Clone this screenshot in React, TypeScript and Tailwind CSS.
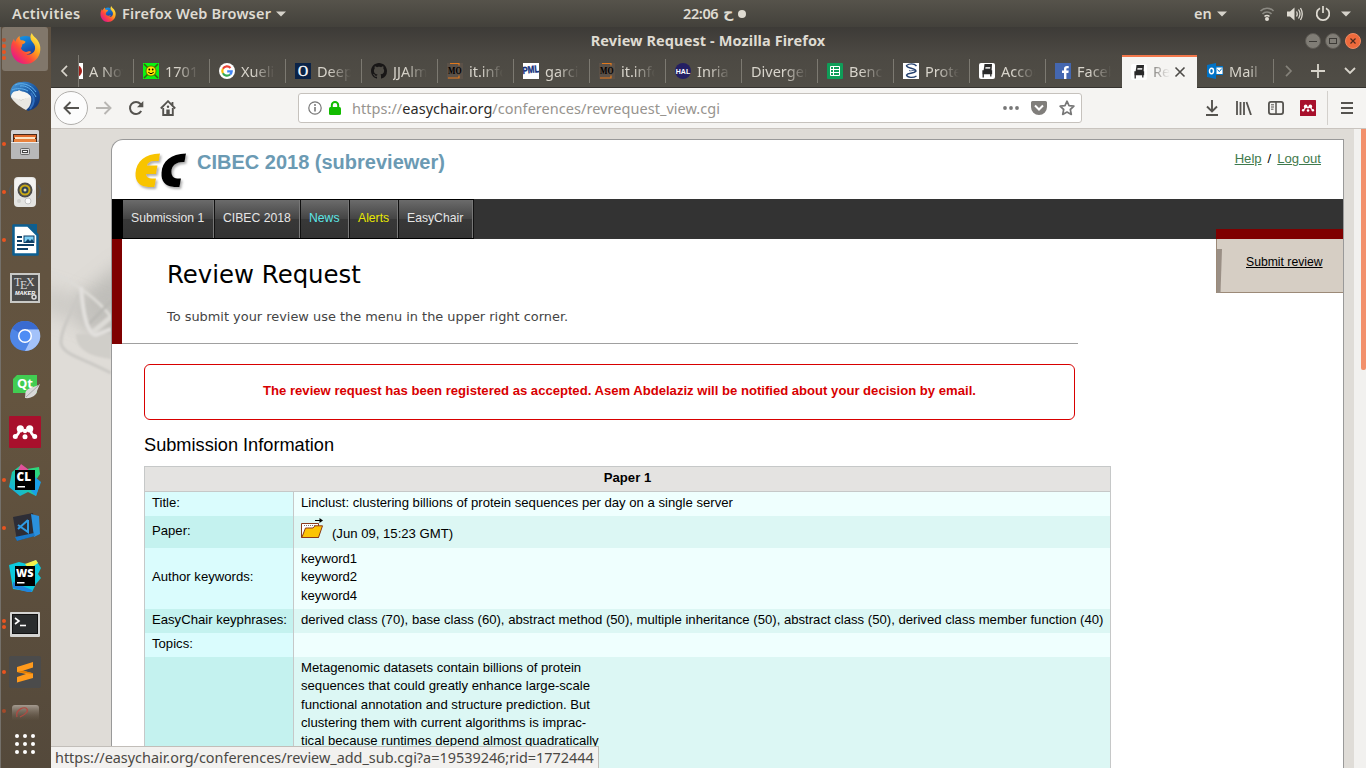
import React from "react";

const UBUNTU = "font-['Noto_Sans',sans-serif]";

/* ---------- dock ---------- */

function FirefoxIcon({ size }: { size: number }) {
  return (
    <svg width={size} height={size} viewBox="0 0 32 32">
      <defs>
        <linearGradient id="ffBody" x1="0.9" y1="0.1" x2="0.15" y2="0.9">
          <stop offset="0" stopColor="#fff04a" />
          <stop offset="0.35" stopColor="#ffa41c" />
          <stop offset="0.65" stopColor="#ff4b3a" />
          <stop offset="1" stopColor="#e3168b" />
        </linearGradient>
        <linearGradient id="ffGlobe" x1="0" y1="0" x2="0.4" y2="1">
          <stop offset="0" stopColor="#12a0f0" />
          <stop offset="1" stopColor="#1b3a9c" />
        </linearGradient>
      </defs>
      <circle cx="16" cy="14.5" r="11.5" fill="url(#ffGlobe)" />
      <path
        d="M1 16C1 11 3 8 4 6c.4 1.5.8 2.2 1.6 3C6.500 6 8 4 10 3c-.3 2 .3 3.400 1.300 4.400 1.700.1 3.500 0 4.700 1.600-.4 1.600-2 2.400-3.500 2.800.3 1.800-.4 2.700-1.300 3.800 1 3.200 4.300 4.800 7.300 3.600 1.500-.6 2.600-.5 3.400.4-1.200 1.700-3.200 2.200-5 2.400 4.600 1 8.600-1.600 9-6 .3-3-1.300-5.200-3-7C20.500 6.500 20.500 3 22.500 0c.8 3 4 4.500 6 7.500 2 3 3 6 2.800 9.500C31 25.500 24.500 32 16 32S1 25 1 16Z"
        fill="url(#ffBody)"
      />
    </svg>
  );
}

function ThunderbirdIcon() {
  return (
    <svg width="32" height="32" viewBox="0 0 32 32">
      <defs>
        <linearGradient id="tb" x1="0" y1="0" x2="1" y2="1">
          <stop offset="0" stopColor="#4fa0dc" />
          <stop offset="0.5" stopColor="#1c5aa5" />
          <stop offset="1" stopColor="#0f2c6b" />
        </linearGradient>
      </defs>
      <path d="M2 18C-1 9 5 1 13 2c9-2 18 5 18 15 0 7-4 12-12 14Z" fill="url(#tb)" />
      <path d="M2 17c2 4 7 9 15 13 4-3 6-8 5-13L10 10Z" fill="#e9e7e2" />
      <path d="M4 15l8 5 9-4" stroke="#b0ada6" fill="none" />
      <path d="M2 17c0-3 2-6 6-6 7 0 12 2 14 6l-10 3Z" fill="#f6f5f2" />
      <path d="M6 5c6-3 16-1 21 7M11 6c6-1 12 3 16 11M3 10c4-2 11-2 16 1" stroke="#5fb0ea" fill="none" />
      <path d="M22 13c4 5 3 11-1 16" stroke="#2f6fc0" strokeWidth="2" fill="none" />
    </svg>
  );
}

function FilesIcon() {
  return (
    <svg width="32" height="32" viewBox="0 0 32 32">
      <rect x="2" y="2" width="28" height="29" rx="2" fill="#a9a9a9" />
      <rect x="2" y="2" width="28" height="11" rx="2" fill="#d3d3d3" />
      <rect x="4" y="6" width="24" height="8" fill="#4a2a1b" />
      <rect x="5" y="7" width="22" height="3" fill="#e06a2b" />
      <rect x="6" y="9" width="20" height="2" fill="#fbe3c4" />
      <rect x="5" y="11" width="22" height="3" fill="#e8823d" />
      <rect x="2" y="14" width="28" height="17" rx="1" fill="#b8b8b8" />
      <rect x="2" y="14" width="28" height="1" fill="#ececec" />
      <rect x="11.500" y="20.500" width="9" height="6" rx="1" fill="#ddd" stroke="#666" />
      <rect x="13.500" y="22.500" width="5" height="2" fill="#fff" stroke="#444" />
    </svg>
  );
}

function RhythmboxIcon() {
  return (
    <svg width="34" height="32" viewBox="0 0 34 32">
      <path d="M4 9c-3 4-3 9 0 13M30 9c3 4 3 9 0 13" stroke="#55585a" strokeWidth="1.500" fill="none" />
      <rect x="6" y="1" width="22" height="30" rx="4" fill="#e4e4e2" />
      <rect x="7" y="2" width="20" height="14" rx="4" fill="#f3f3f2" />
      <circle cx="17" cy="14" r="7.500" fill="#4c4c4c" />
      <circle cx="17" cy="14" r="5.500" fill="#c9a916" />
      <circle cx="17" cy="14" r="3.500" fill="#2f4356" />
      <circle cx="17" cy="14" r="1.500" fill="#e8e2b0" />
      <circle cx="11" cy="25" r="2" fill="#cfcfcd" />
      <circle cx="20" cy="25" r="3" fill="#fafafa" stroke="#c4c4c4" />
    </svg>
  );
}

function WriterIcon() {
  return (
    <svg width="32" height="32" viewBox="0 0 32 32">
      <path d="M4.500 1.500H19L28.500 11V30.500H4.500Z" fill="#fff" stroke="#0c5f92" strokeWidth="2.500" strokeLinejoin="round" />
      <path d="M20 0h8v9Z" fill="#0c5f92" />
      <path d="M8 13h5M8 17h5M8 21h17M8 25h11" stroke="#0f3f66" strokeWidth="2" />
      <rect x="15" y="12" width="10" height="6.500" fill="#7fd0f5" stroke="#0f3f66" />
      <path d="M16 18l3-3 2 2 2-2 2 3Z" fill="#0f3f66" />
    </svg>
  );
}

function TexmakerIcon() {
  return (
    <svg width="32" height="32" viewBox="0 0 32 32">
      <rect x="2" y="2" width="28" height="28" fill="#4b4b4b" stroke="#c9c9c6" strokeWidth="2" />
      <text fontFamily="Liberation Serif" fontSize="12" fill="#d9d9d9" x="5 11 17" y="14 17 14">TEX</text>
      <text x="6" y="22.500" fontFamily="Liberation Sans" fontWeight="700" fontStyle="italic" fontSize="5.500" fill="#fff">MAKER</text>
      <circle cx="25" cy="25" r="2" fill="none" stroke="#ddd" strokeWidth="1.500" />
    </svg>
  );
}

function ChromiumIcon() {
  return (
    <svg width="32" height="32" viewBox="0 0 32 32">
      <circle cx="16" cy="16" r="15" fill="#4f86e6" />
      <path d="M16 16L3 8.500A15 15 0 0 1 29.500 9.500H16Z" fill="#3a6bd0" />
      <path d="M22 19L16 31A15 15 0 0 0 29.800 9.500H18Z" fill="#a3c2fa" />
      <circle cx="16" cy="16" r="7" fill="#fff" />
      <circle cx="16" cy="16" r="5.500" fill="#4e8df5" />
    </svg>
  );
}

function QtIcon() {
  return (
    <svg width="32" height="32" viewBox="0 0 32 32">
      <path d="M8 7H28V25H4V11Z" fill="#41cd52" />
      <text x="8" y="20" fontFamily="Open Sans" fontWeight="700" fontSize="13" fill="#fff">Qt</text>
      <path d="M31 16c-3 3-12 3-14.500 8L16 30c6 1 12-3 12-7Z" fill="#d9d9d9" />
      <path d="M30 17L17 29" stroke="#aaa" />
    </svg>
  );
}

function MendeleyIcon({ size }: { size: number }) {
  return (
    <svg width={size} height={size} viewBox="0 0 32 32">
      <rect width="32" height="32" rx="1" fill="#a8102c" />
      <g fill="#fff">
        <circle cx="11.300" cy="12.800" r="3.600" />
        <circle cx="20.700" cy="12.800" r="3.600" />
        <circle cx="16" cy="15" r="2.200" />
        <circle cx="6.300" cy="20.500" r="2.500" />
        <circle cx="16" cy="20.800" r="2.500" />
        <circle cx="25.700" cy="20.500" r="2.500" />
      </g>
      <path d="M6.300 20.500c1.700-1 3.700-3 4.300-6.500M25.700 20.500c-1.700-1-3.700-3-4.300-6.500" stroke="#fff" strokeWidth="2.600" fill="none" />
    </svg>
  );
}

function ClionIcon() {
  return (
    <svg width="32" height="32" viewBox="0 0 32 32">
      <defs>
        <linearGradient id="cl" x1="0" y1="1" x2="1" y2="0">
          <stop offset="0" stopColor="#12a7f0" />
          <stop offset="0.55" stopColor="#1fd19b" />
          <stop offset="1" stopColor="#32d96f" />
        </linearGradient>
      </defs>
      <path d="M3 8L12 1l6 4L30 3l1 7-4 6 4 3-4 13-8-4-8 4L0 23Z" fill="url(#cl)" />
      <path d="M12 0l8 6H9Z" fill="#e0519a" />
      <path d="M26 13l6 5-5 14-5-5Z" fill="#1a9fe8" />
      <rect x="6" y="6" width="20" height="20" fill="#000" />
      <text x="7.500" y="16.500" fontFamily="Open Sans" fontWeight="800" fontSize="11.500" textLength="14.500" lengthAdjust="spacingAndGlyphs" fill="#fff">CL</text>
      <rect x="8.500" y="22" width="7.500" height="1.500" fill="#fff" />
    </svg>
  );
}

function CodeIcon() {
  return (
    <svg width="32" height="32" viewBox="0 0 32 32">
      <path d="M4 5l20-4 4 22-20 6Z" fill="#2d2d36" />
      <path d="M22 2l8 2 1 18-6 3Z" fill="#2a90dd" />
      <path d="M8 29l-2-4 19-4 1 3Z" fill="#1a78c8" />
      <path d="M19 8v12l-10-7M19 8L9 17" stroke="#2f9be5" strokeWidth="2" fill="none" />
    </svg>
  );
}

function WebstormIcon() {
  return (
    <svg width="32" height="32" viewBox="0 0 32 32">
      <path d="M0 5l10-3 8 2 9-4 5 8-3 6 3 4-5 6-4 8-19-3Z" fill="#0bc9dd" />
      <path d="M16 4l11-4 2 3-9 6Z" fill="#f4f04a" />
      <path d="M4 22l19 8-1 3L4 28Z" fill="#2184dd" />
      <rect x="6" y="6" width="20" height="20" fill="#000" />
      <text x="7" y="16.500" fontFamily="Open Sans" fontWeight="800" fontSize="11" textLength="17.500" lengthAdjust="spacingAndGlyphs" fill="#fff">WS</text>
      <rect x="8" y="22" width="7.500" height="1.500" fill="#fff" />
    </svg>
  );
}

function TerminalIcon() {
  return (
    <svg width="32" height="32" viewBox="0 0 32 32">
      <rect x="1" y="4" width="30" height="25" rx="1" fill="#d4d4d2" />
      <rect x="3.500" y="6.500" width="25" height="19" fill="#2a2d2e" stroke="#111" />
      <path d="M6 10l4 3-4 3" stroke="#fff" strokeWidth="1.600" fill="none" />
      <path d="M11 17.500h6" stroke="#fff" strokeWidth="1.600" />
    </svg>
  );
}

function SublimeIcon() {
  return (
    <svg width="32" height="32" viewBox="0 0 32 32">
      <rect width="32" height="32" rx="2" fill="#4b4b4b" />
      <path d="M8 11L24 6v5.500L14 14.700l10 2.600V22L8 26.500V21l9-3L8 16Z" fill="#ff9a1c" />
      <path d="M8 16l16 2v-.7l-10-2.600Z" fill="#e07b00" />
    </svg>
  );
}

function FadedIcon() {
  return (
    <svg width="32" height="16" viewBox="0 0 32 16">
      <defs>
        <linearGradient id="fade" x1="0" y1="0" x2="0" y2="1">
          <stop offset="0" stopColor="#a59b90" />
          <stop offset="1" stopColor="#6a5c4d" stopOpacity="0" />
        </linearGradient>
      </defs>
      <rect x="3" y="1" width="27" height="16" rx="3" fill="url(#fade)" />
      <path d="M8 13c-2-8 8-11 10-8s-3 6-7 8" stroke="#b04a42" strokeWidth="1.300" fill="none" />
    </svg>
  );
}

function DockItem({ dots, children }: { dots: number; children: React.ReactNode }) {
  return (
    <div className="relative flex h-12 w-12 shrink-0 items-center justify-center">
      <div className="absolute inset-y-0 left-[1px] flex flex-col items-center justify-center gap-[2px]">
        {Array.from({ length: dots }, (_, i) => (
          <span key={i} className="size-1 rounded-full bg-[#e95420]" />
        ))}
      </div>
      {children}
    </div>
  );
}

function Dock() {
  return (
    <aside className="flex w-[51px] shrink-0 flex-col overflow-hidden border-l border-[#74706a] bg-linear-to-b from-[#5e5142] via-[#64543f] to-[#54493b]">
      <div className="relative flex h-[45px] w-12 shrink-0 items-center justify-center pb-[3px]">
        <span className="absolute top-0 left-[1px] h-[44px] w-[46px] rounded-[3px] bg-[#81776b]" />
        <div className="absolute top-[11px] left-[1px] flex flex-col gap-[2px]">
          <span className="size-1 rounded-full bg-[#b5532f]" />
          <span className="size-1 rounded-full bg-[#e95420]" />
          <span className="size-1 rounded-full bg-[#e95420]" />
          <span className="size-1 rounded-full bg-[#e95420]" />
        </div>
        <span className="relative"><FirefoxIcon size={31} /></span>
      </div>
      <DockItem dots={0}><ThunderbirdIcon /></DockItem>
      <DockItem dots={1}><FilesIcon /></DockItem>
      <DockItem dots={1}><RhythmboxIcon /></DockItem>
      <DockItem dots={1}><WriterIcon /></DockItem>
      <DockItem dots={0}><TexmakerIcon /></DockItem>
      <DockItem dots={0}><ChromiumIcon /></DockItem>
      <DockItem dots={0}><QtIcon /></DockItem>
      <DockItem dots={0}><MendeleyIcon size={32} /></DockItem>
      <DockItem dots={1}><ClionIcon /></DockItem>
      <DockItem dots={1}><CodeIcon /></DockItem>
      <DockItem dots={0}><WebstormIcon /></DockItem>
      <DockItem dots={2}><TerminalIcon /></DockItem>
      <DockItem dots={1}><SublimeIcon /></DockItem>
      <div className="relative flex h-[32px] w-12 shrink-0 justify-center pt-[8px]">
        <span className="absolute top-[13px] left-[1px] size-1 rounded-full bg-[#a34a2a]" />
        <FadedIcon />
      </div>
      <div className="mt-[6px] grid w-12 grid-cols-[repeat(3,4px)] justify-center gap-1">
        {Array.from({ length: 9 }, (_, i) => (
          <span key={i} className="size-1 rounded-full bg-white" />
        ))}
      </div>
    </aside>
  );
}

/* ---------- system bar ---------- */

function Caret() {
  return (
    <svg width="10" height="6" viewBox="0 0 10 6"><path d="M0 .5h10L5 5.500Z" fill="#d5d2ca" /></svg>
  );
}

function SystemBar() {
  return (
    <header className={`${UBUNTU} flex h-[27px] shrink-0 items-center bg-linear-to-b from-[#56534b] to-[#43413b] text-[14.500px] font-semibold text-[#dfdbd2]`}>
      <div className="w-[88px] pl-3 tracking-[0.4px]">Activities</div>
      <div className="flex w-[595px] items-center pl-3">
        <FirefoxIcon size={16} />
        <span className="ml-[6px] tracking-[0.200px]">Firefox Web Browser</span>
        <span className="ml-[5px] flex"><Caret /></span>
      </div>
      <div className="flex w-[511px] items-center">
        <span className="tracking-[-0.4px]">22:06</span>
        <span className="ml-[5px] font-['DejaVu_Sans',sans-serif] text-[14px]">ح</span>
        <span className="ml-[5px] size-[8px] rounded-full bg-[#dfdbd2]" />
      </div>
      <span className="w-[23px]">en</span>
      <Caret />
      <svg className="ml-[32px]" width="16" height="16" viewBox="0 0 16 16" fill="none">
        <path d="M1.500 5a9 9 0 0 1 13 0" stroke="#8b8982" strokeWidth="1.600" />
        <path d="M3.500 8a6 6 0 0 1 9 0" stroke="#8b8982" strokeWidth="1.600" />
        <path d="M5.500 10.500a3.500 3.500 0 0 1 5 0" stroke="#dfdbd2" strokeWidth="1.600" />
        <circle cx="8" cy="13" r="2" fill="#dfdbd2" />
      </svg>
      <svg className="ml-[12px]" width="16" height="16" viewBox="0 0 16 16" fill="none">
        <path d="M0 5.500h3L7.500 1.500v13L3 10.500H0Z" fill="#dfdbd2" />
        <path d="M9.500 5.500q1.500 2.500 0 5M11.500 3.500q3 4.500 0 9M13.500 2q3.500 6 0 12" stroke="#dfdbd2" strokeWidth="1.300" />
      </svg>
      <svg className="ml-[12px]" width="16" height="16" viewBox="0 0 16 16" fill="none" stroke="#dfdbd2" strokeWidth="1.700">
        <path d="M5 2.300a6.300 6.300 0 1 0 6 0M8 0v7" />
      </svg>
      <span className="ml-[10px] flex"><Caret /></span>
    </header>
  );
}

/* ---------- browser chrome ---------- */

function TitleBar() {
  return (
    <div className="flex h-[28px] shrink-0 items-center bg-linear-to-b from-[#3d3b37] to-[#4c4943]">
      <div className={`${UBUNTU} flex-1 pl-[60px] text-center text-[14.500px] tracking-[0.1px] font-bold text-[#dfdbd2]`}>
        Review Request - Mozilla Firefox
      </div>
      <div className="flex gap-1 pr-[5px]">
        <svg width="16" height="16" viewBox="0 0 16 16"><circle cx="8" cy="8" r="7.500" fill="#807d76" stroke="#5d5a54" /><path d="M4 8.500h8" stroke="#3c3a36" /></svg>
        <svg width="16" height="16" viewBox="0 0 16 16"><circle cx="8" cy="8" r="7.500" fill="#807d76" stroke="#5d5a54" /><rect x="4.500" y="5.500" width="7" height="5" fill="none" stroke="#3c3a36" /></svg>
        <svg width="16" height="16" viewBox="0 0 16 16"><circle cx="8" cy="8" r="7.500" fill="#ee6a3c" stroke="#f08a62" /><path d="M5.500 5.500l5 5M10.500 5.500l-5 5" stroke="#4b2a1e" strokeWidth="1.200" /></svg>
      </div>
    </div>
  );
}

const Svg16 = ({ children }: { children: React.ReactNode }) => (
  <svg className="shrink-0" width="16" height="16" viewBox="0 0 16 16">{children}</svg>
);

const chair = (
  <Svg16>
    <rect width="16" height="16" rx="2" fill="#fff" />
    <path d="M5.500 1h7.500l-.5 7.500H4.500Z" fill="#2a2a2a" />
    <path d="M6.500 4h4.800l-.2 1.800H6.300Z" fill="#d8d8d8" />
    <path d="M4 8h8.500v2.500H4ZM4.200 10v4.500M11.800 10v3.500" stroke="#2a2a2a" strokeWidth="1.300" fill="#2a2a2a" />
  </Svg16>
);

const madOnt = (
  <Svg16>
    <rect width="16" height="16" fill="#5b5148" />
    <path d="M3 .5h9v2M12 12.500v2.500H1" stroke="#e2791c" strokeWidth="1.200" fill="none" />
    <text x="1" y="11" fontFamily="Liberation Serif" fontWeight="700" fontSize="10" textLength="13.500" lengthAdjust="spacingAndGlyphs" fill="#000">MO</text>
  </Svg16>
);

const favicons: Record<string, React.ReactNode> = {
  red: <Svg16><rect width="16" height="16" fill="#fff" /><circle cx="9" cy="8" r="6" fill="#a5201a" /></Svg16>,
  smile: (
    <Svg16>
      <rect width="16" height="16" fill="#0cf312" />
      <path d="M1 1l14 14M15 1L1 15" stroke="#3b5a12" strokeWidth="1.500" />
      <circle cx="8" cy="8" r="5" fill="#ffe600" stroke="#5a5a00" strokeWidth=".8" />
      <circle cx="6.300" cy="6.500" r=".9" /><circle cx="9.700" cy="6.500" r=".9" />
      <path d="M5.300 9.300q2.700 3 5.400 0" stroke="#000" fill="none" />
    </Svg16>
  ),
  google: (
    <Svg16>
      <circle cx="8" cy="8" r="8" fill="#fff" />
      <g fill="none" strokeWidth="2.200">
        <path d="M11.500 4.900A4.700 4.700 0 0 0 3.900 5.700" stroke="#ea4335" />
        <path d="M3.900 5.700a4.700 4.700 0 0 0 0 4.600" stroke="#fbbc05" />
        <path d="M3.900 10.300a4.700 4.700 0 0 0 7.200 1.200" stroke="#34a853" />
        <path d="M11.100 11.500A4.700 4.700 0 0 0 12.700 8.300H8.200" stroke="#4285f4" />
      </g>
    </Svg16>
  ),
  oxford: (
    <Svg16>
      <rect width="16" height="16" fill="#0b2347" />
      <text x="8" y="12.500" textAnchor="middle" fontFamily="Liberation Serif" fontSize="14" stroke="#fff" strokeWidth=".4" fill="#fff">O</text>
    </Svg16>
  ),
  github: (
    <Svg16>
      <path
        fill="#181616"
        d="M8 0C3.580 0 0 3.580 0 8c0 3.540 2.290 6.530 5.470 7.590.4.070.55-.17.55-.38 0-.19-.01-.82-.01-1.490-2.010.37-2.530-.49-2.690-.94-.09-.23-.48-.94-.82-1.130-.28-.15-.68-.52-.01-.53.63-.01 1.080.58 1.230.82.72 1.210 1.870.87 2.330.66.07-.52.28-.87.51-1.070-1.780-.2-3.640-.89-3.640-3.950 0-.87.31-1.590.82-2.150-.08-.2-.36-1.020.08-2.120 0 0 .67-.21 2.200.82.64-.18 1.320-.27 2-.27s1.360.09 2 .27c1.530-1.040 2.200-.82 2.200-.82.44 1.100.16 1.920.08 2.120.51.56.82 1.270.82 2.150 0 3.070-1.870 3.750-3.650 3.950.29.25.54.73.54 1.480 0 1.070-.01 1.930-.01 2.200 0 .21.15.46.55.38A8.010 8.010 0 0 0 16 8c0-4.420-3.580-8-8-8Z"
      />
    </Svg16>
  ),
  mo: madOnt,
  pml: (
    <Svg16>
      <rect width="16" height="16" fill="#fff" />
      <text x="-.5" y="10" fontFamily="Liberation Sans" fontWeight="700" fontSize="10" textLength="17" lengthAdjust="spacingAndGlyphs" fill="#14307c" stroke="#14307c" strokeWidth=".4" transform="rotate(-6 8 8)">PML</text>
    </Svg16>
  ),
  hal: (
    <Svg16>
      <circle cx="8" cy="8" r="8" fill="#241f63" />
      <text x="8" y="10.500" textAnchor="middle" fontFamily="Liberation Sans" fontWeight="700" fontSize="7" fill="#fff">HAL</text>
    </Svg16>
  ),
  sheets: (
    <Svg16>
      <rect width="16" height="16" rx="1" fill="#0f9d58" />
      <path d="M3.500 3.500h9v9h-9ZM3.500 6.500h9M3.500 9.500h9M6.500 3.500v9" stroke="#fff" fill="none" />
    </Svg16>
  ),
  prot: (
    <Svg16>
      <rect width="16" height="16" fill="#fff" />
      <path d="M13.500 3C11 0 6 .5 3.500 2.500c0 3 9 2.500 9.500 5.500-2 3-8 1.500-9.500 4 1 3 7 3 10 1" stroke="#24406e" strokeWidth="1.400" fill="none" />
      <path d="M6 7.500c2 1 3-.5 6 0" stroke="#5c7296" fill="none" />
    </Svg16>
  ),
  chair,
  fb: (
    <Svg16>
      <rect width="16" height="16" fill="#4467b0" />
      <path d="M9 16V10H7V7.500h2V5.800C9 3.800 10.200 3 12 3h1.700v2.300h-1.300c-.8 0-1 .4-1 1v1.200h2.300L13.400 10h-2v6Z" fill="#fff" />
    </Svg16>
  ),
  outlook: (
    <Svg16>
      <path d="M0 2l9-2v16l-9-2Z" fill="#0072c6" />
      <rect x="9" y="3" width="7" height="9" fill="#0072c6" />
      <rect x="9.500" y="4.500" width="6" height="6.500" fill="#fff" />
      <path d="M10.500 6.500l1.800 2.200 2.500-3.200" stroke="#0072c6" fill="none" />
      <ellipse cx="4.500" cy="8" rx="2" ry="2.700" fill="none" stroke="#fff" strokeWidth="1.500" />
    </Svg16>
  ),
};

const tabs: [string, string][] = [
  ["red", "A Nov"],
  ["smile", "1701.0"],
  ["google", "Xuelia"],
  ["oxford", "Deep l"],
  ["github", "JJAlm"],
  ["mo", "it.info"],
  ["pml", "garcia"],
  ["mo", "it.info"],
  ["hal", "Inria -"],
  ["", "Divergen"],
  ["sheets", "Bench"],
  ["prot", "Protei"],
  ["chair", "Accou"],
  ["fb", "Facebo"],
];

function Tab({ icon, label }: { icon: string; label: string }) {
  return (
    <div className="flex w-[76px] shrink-0 items-center">
      <span className="h-6 w-px bg-[#7c7971]" />
      <div className="flex w-[65px] items-center gap-[6px] pl-[9px]">
        {icon && favicons[icon]}
        <span className="min-w-0 flex-1 overflow-hidden pt-[2px] whitespace-nowrap [mask-image:linear-gradient(to_left,transparent,black_22px)]">
          {label}
        </span>
      </div>
    </div>
  );
}

function TabStrip() {
  return (
    <div className={`${UBUNTU} flex h-[33px] shrink-0 border-b border-[#35332f] bg-linear-to-b from-[#4c4943] to-[#504d46] text-[14.500px] text-[#d8d4cb]`}>
      <div className="flex w-7 shrink-0 items-center justify-center border-r border-[#7c7971]">
        <svg width="9" height="12" viewBox="0 0 9 12"><path d="M7 .8L2 6l5 5.200" stroke="#d8d4cb" strokeWidth="1.700" fill="none" /></svg>
      </div>
      <div className="flex w-[1043px] shrink-0 overflow-hidden">
        <div className="-ml-[22px] flex">
          {tabs.map(([icon, label], i) => (
            <Tab key={i} icon={icon} label={label} />
          ))}
        </div>
      </div>
      <div className="-mb-px flex w-[75px] shrink-0 items-center border-t-2 border-[#f2774b] bg-[#f5f4f2] pb-[2px] pl-[9px] text-[#8d8b88]">
        {chair}
        <span className="ml-[6px] w-[17px] overflow-hidden pt-px whitespace-nowrap [mask-image:linear-gradient(to_left,transparent,black_16px)]">Rev</span>
        <svg className="ml-[4px]" width="12" height="12" viewBox="0 0 12 12"><path d="M1.500 1.500l9 9M10.500 1.500l-9 9" stroke="#4d4b48" strokeWidth="1.600" /></svg>
      </div>
      <div className="flex w-[76px] shrink-0 items-center gap-[6px] pl-[10px]">
        {favicons.outlook}
        <span className="w-[34px] overflow-hidden pt-[2px] whitespace-nowrap [mask-image:linear-gradient(to_left,transparent,black_14px)]">Mail -</span>
      </div>
      <div className="flex items-center">
        <span className="h-6 w-px bg-[#7c7971]" />
        <svg className="ml-[10px]" width="9" height="12" viewBox="0 0 9 12"><path d="M2 .8L7 6l-5 5.200" stroke="#85827a" strokeWidth="1.700" fill="none" /></svg>
        <svg className="ml-[18px]" width="14" height="14" viewBox="0 0 14 14"><path d="M7 0v14M0 7h14" stroke="#d8d4cb" strokeWidth="1.800" /></svg>
        <svg className="ml-[19px]" width="12" height="8" viewBox="0 0 12 8"><path d="M1 1l5 5 5-5" stroke="#d8d4cb" strokeWidth="1.800" fill="none" /></svg>
      </div>
    </div>
  );
}

function Toolbar() {
  return (
    <div className="flex h-[41px] shrink-0 items-center border-b border-[#c9c4bf] bg-[#f5f4f2]">
      <div className="ml-[3px] flex size-[34px] shrink-0 items-center justify-center rounded-full border border-[#b1afac] bg-[#fcfcfc]">
        <svg width="16" height="14" viewBox="0 0 16 14"><path d="M7.500 1L1.500 7l6 6M1.500 7H16" stroke="#55534f" strokeWidth="1.900" fill="none" /></svg>
      </div>
      <svg className="ml-[8px]" width="16" height="14" viewBox="0 0 16 14"><path d="M8.500 1l6 6-6 6M14.500 7H0" stroke="#b8b6b3" strokeWidth="1.900" fill="none" /></svg>
      <svg className="ml-[16px]" width="16" height="16" viewBox="0 0 16 16">
        <path d="M13.200 11A6 6 0 1 1 12.500 4L14 6" stroke="#55534f" strokeWidth="2" fill="none" /><path d="M15.300 1v6.300H9Z" fill="#55534f" />
      </svg>
      <svg className="ml-[16px]" width="16" height="16" viewBox="0 0 16 16">
        <path d="M.8 8.500L8 1.200l7.200 7.300M12.500 2v3" stroke="#55534f" strokeWidth="1.800" fill="none" />
        <path d="M3.200 8v7h9.600V8" stroke="#55534f" strokeWidth="1.900" fill="none" />
        <rect x="6.300" y="9.500" width="3.400" height="6" fill="#55534f" /><circle cx="8" cy="6.700" r="1.200" fill="#55534f" />
      </svg>
      <div className={`${UBUNTU} ml-[122px] flex h-[30px] w-[784px] shrink-0 items-center rounded-[3px] border border-[#c6c2bd] bg-white text-[14.500px] text-[#97948f]`}>
        <svg className="ml-[9px]" width="14" height="14" viewBox="0 0 14 14"><circle cx="7" cy="7" r="6.200" stroke="#777" strokeWidth="1.200" fill="none" /><path d="M7 6v4.500" stroke="#777" strokeWidth="1.600" /><circle cx="7" cy="3.900" r="1" fill="#777" /></svg>
        <svg className="ml-[7px]" width="12" height="14" viewBox="0 0 12 14"><rect x="0" y="6" width="12" height="8" rx="1.500" fill="#12bc00" /><path d="M2.800 7V4.200a3.200 3.200 0 0 1 6.400 0V7" stroke="#12bc00" strokeWidth="2" fill="none" /></svg>
        <span className="ml-[11px] flex-1 pt-[2px] tracking-[0.040px]">
          https://<span className="text-[#2d2b29]">easychair.org</span>/conferences/revrequest_view.cgi
        </span>
        <svg className="mr-[12px]" width="16" height="4" viewBox="0 0 16 4" fill="#777"><circle cx="2" cy="2" r="1.900" /><circle cx="8" cy="2" r="1.900" /><circle cx="14" cy="2" r="1.900" /></svg>
        <svg className="mr-[12px]" width="16" height="14" viewBox="0 0 16 14"><path d="M1.500 0h13A1.500 1.500 0 0 1 16 1.500V6A8 8 0 0 1 0 6V1.500A1.500 1.500 0 0 1 1.500 0Z" fill="#807e7b" /><path d="M4 4.500l4 4 4-4" stroke="#fff" strokeWidth="2" fill="none" /></svg>
        <svg className="mr-[6px]" width="16" height="16" viewBox="0 0 16 16"><path d="M8 1.200l2 4.500 4.900.5-3.600 3.300 1 4.900L8 12l-4.300 2.400 1-4.900L1.100 6.200 6 5.700Z" stroke="#777" strokeWidth="1.700" fill="none" strokeLinejoin="round" /></svg>
      </div>
      <div className="flex flex-1 items-center justify-end">
        <svg width="14" height="16" viewBox="0 0 14 16"><path d="M7 0v11M2 6.500l5 5 5-5M1 15h12" stroke="#55534f" strokeWidth="1.900" fill="none" /></svg>
        <svg className="ml-[17px]" width="16" height="14" viewBox="0 0 16 14"><path d="M1 0v14M4.500 1v13M8 1v13M10.500 1l4.500 13" stroke="#55534f" strokeWidth="1.800" fill="none" /></svg>
        <svg className="ml-[16px]" width="16" height="14" viewBox="0 0 16 14"><rect x=".9" y=".9" width="14.200" height="12.200" rx="2" stroke="#55534f" strokeWidth="1.800" fill="none" /><path d="M8 1v12" stroke="#55534f" strokeWidth="1.500" /><path d="M3 3.800h3M3 6h3M3 8.200h2.500" stroke="#55534f" /></svg>
        <span className="ml-[16px]"><MendeleyIcon size={16} /></span>
        <span className="ml-[11px] h-[34px] w-px bg-[#d3d0cc]" />
        <svg className="mr-[13px] ml-[13px]" width="12" height="12" viewBox="0 0 12 12"><path d="M0 1h12M0 6h12M0 11h12" stroke="#55534f" strokeWidth="1.900" /></svg>
      </div>
    </div>
  );
}

/* ---------- page ---------- */

function PageBackdrop() {
  return (
    <svg className="absolute top-0 left-0" width="60" height="639" viewBox="0 0 60 639">
      <defs>
        <filter id="soft" x="-100%" y="-100%" width="300%" height="300%"><feGaussianBlur stdDeviation="9" /></filter>
        <filter id="soft1"><feGaussianBlur stdDeviation="1" /></filter>
      </defs>
      <path d="M25 170L75 130V215L35 200Z" fill="#b4b3af" opacity=".75" filter="url(#soft)" />
      <path d="M-10 155L60 180V205L-10 182Z" fill="#c6c4c0" opacity=".7" filter="url(#soft)" />
      <g fill="none" filter="url(#soft1)">
        <path d="M28 165C20 185 10 200 10 214C12 226 30 228 60 244" stroke="#cbc9c5" strokeWidth="3" />
        <path d="M25 205h35v25C45 228 25 224 25 205Z" fill="#d0cec9" />
        <path d="M0 142C20 152 45 168 60 188" stroke="#dddbd7" strokeWidth="3" />
        <path d="M38 195L60 172" stroke="#bbbab6" strokeWidth="3" />
        <path d="M30 158C32 185 36 205 45 206L60 200" stroke="#e2e0dd" strokeWidth="4" />
        <path d="M42 203L60 188" stroke="#dddbd7" strokeWidth="5" />
      </g>
    </svg>
  );
}

function EcLogo() {
  return (
    <svg className="ml-[22px] shrink-0" width="56" height="42" viewBox="0 0 56 42">
      <defs>
        <filter id="ecs" x="-20%" y="-20%" width="150%" height="150%"><feDropShadow dx="1.500" dy="2" stdDeviation="1" floodColor="#777" floodOpacity=".6" /></filter>
      </defs>
      <g filter="url(#ecs)">
        <path d="M26 3.500L24.800 11H20C16.500 11 14 12.500 13 15.500H23.500L22 24H12C12.500 27 14.500 28.500 18 28.500H22L20.500 37H14C5 36.500 1 31 1.500 23C2.500 11 11 4 26 3.500Z" fill="#f8c400" />
        <path d="M52 3.500L50.500 12C42 11.500 37.500 16 37.500 21.500C37.500 27 40.500 29 47 28.500L45.500 37H40C31 36.500 27 31 27.500 23C28 11 37 4 52 3.500Z" fill="#000" />
      </g>
    </svg>
  );
}

const navItems = [
  { label: "Submission 1", cls: "w-[92px] text-[#e6e6e6]" },
  { label: "CIBEC 2018", cls: "w-[86px] text-[#e6e6e6]" },
  { label: "News", cls: "w-[49px] text-[#5ce6e6]" },
  { label: "Alerts", cls: "w-[49px] text-[#e8e800]" },
  { label: "EasyChair", cls: "w-[75px] text-[#e6e6e6]" },
];

function NavBar() {
  return (
    <nav className="flex h-10 bg-[#333] text-[12.200px]">
      <span className="w-[11px] bg-black" />
      {navItems.map((n) => (
        <div
          key={n.label}
          className={`${n.cls} flex h-10 items-center border-y border-black bg-[linear-gradient(to_bottom,#6b6b6b,#444_50%,#383838_51%,#333)] pb-[1px] pl-2 whitespace-nowrap shadow-[inset_-1px_0_#111,inset_-2px_0_#777]`}
        >
          {n.label}
        </div>
      ))}
    </nav>
  );
}

function SideMenu() {
  return (
    <div className="absolute top-[89px] right-0 h-[64px] w-[127px] border-t-[10px] border-[#7f0000] bg-[#d6cec4]">
      <div className="flex h-[54px] border-b border-l border-[#9c8a78]">
        <svg width="6" height="54" viewBox="0 0 6 54"><path d="M0 10h5L3.500 54H0Z" fill="#9a8f85" /></svg>
        <a className="ml-[23px] pt-[14px] text-[12.200px] whitespace-nowrap text-black underline">Submit review</a>
      </div>
    </div>
  );
}

const rows: { label: string; h: string; body: React.ReactNode }[] = [
  { label: "Title:", h: "h-6", body: "Linclust: clustering billions of protein sequences per day on a single server" },
  {
    label: "Paper:",
    h: "h-8",
    body: (
      <div className="flex items-end">
        <svg className="mb-[4px]" width="24" height="21" viewBox="0 0 24 21">
          <path d="M.5 5.500h17v14H.5Z" fill="#fff" stroke="#8a3a1a" />
          <path d="M3 7.500h12" stroke="#777" strokeDasharray="1 1" />
          <path d="M.8 19.500L4.500 10h7.500l2-2.200h7.500L17.500 19.500Z" fill="#fcc404" stroke="#8a3a1a" />
          <path d="M14 2.500h5" stroke="#000" />
          <path d="M18.500 0l3.500 2.500L18.500 5Z" fill="#000" />
        </svg>
        <span className="ml-[7px]">(Jun 09, 15:23 GMT)</span>
      </div>
    ),
  },
  { label: "Author keywords:", h: "h-[61px]", body: <>keyword1<br />keyword2<br />keyword4</> },
  {
    label: "EasyChair keyphrases:",
    h: "h-6",
    body: "derived class (70), base class (60), abstract method (50), multiple inheritance (50), abstract class (50), derived class member function (40)",
  },
  { label: "Topics:", h: "h-6", body: "" },
  {
    label: "",
    h: "h-[130px]",
    body: (
      <>
        Metagenomic datasets contain billions of protein<br />
        sequences that could greatly enhance large-scale<br />
        functional annotation and structure prediction. But<br />
        clustering them with current algorithms is imprac-<br />
        tical because runtimes depend almost quadratically
      </>
    ),
  },
];

function SubmissionTable() {
  return (
    <div className="mt-[9px] ml-8 w-[967px] border border-[#c6c8c8] text-[13.130px] leading-[18.350px] text-black">
      <div className="flex h-[25px] justify-center border-b border-[#c6c8c8] bg-[#e4e3e1] pt-[2px] font-bold">Paper 1</div>
      {rows.map((r, i) => (
        <div key={i} className={`${r.h} flex whitespace-nowrap`}>
          <div className={`${i % 2 ? "bg-[#c4f2ef]" : "bg-[#dafcfd]"} flex w-[149px] shrink-0 items-center border-r border-[#c6c8c8] pb-[2px] pl-[7px]`}>
            {r.label}
          </div>
          <div className={`${i % 2 ? "bg-[#dcf7f4]" : "bg-[#effffe]"} flex-1 pt-[2px] pl-[7px]`}>{r.body}</div>
        </div>
      ))}
    </div>
  );
}

function Page() {
  return (
    <div className="relative flex min-h-0 flex-1 bg-[#dfdcd7] font-['Liberation_Sans',Arial,sans-serif]">
      <PageBackdrop />
      <div className="relative mt-[10px] ml-[60px] flex w-[1233px] shrink-0 flex-col overflow-hidden rounded-tl-[12px] border border-b-0 border-[#999] bg-white">
        <div className="flex h-[59px] shrink-0 pt-[10px]">
          <EcLogo />
          <h1 className="ml-[7px] flex-1 text-[20px] leading-6 font-bold text-[#6b9ab3]">CIBEC 2018 (subreviewer)</h1>
          <div className="-mt-px pr-[22px] text-[13.120px] text-black">
            <a className="text-[#3f7a4d] underline">Help</a>
            <span className="mx-[6px]">/</span>
            <a className="text-[#3f7a4d] underline">Log out</a>
          </div>
        </div>
        <NavBar />
        <SideMenu />
        <div className="h-[105px] w-[966px] shrink-0 border-b border-[#a0a0a0] font-['DejaVu_Sans',sans-serif]">
          <div className="-mb-px h-[105px] border-l-[10px] border-[#7f0000] pl-[45px]">
            <h2 className="pt-[20px] text-[24.400px] leading-[32px] text-black">Review Request</h2>
            <p className="mt-[16px] text-[12.920px] leading-5 text-[#444]">To submit your review use the menu in the upper right corner.</p>
          </div>
        </div>
        <div className="mt-5 ml-8 flex h-14 w-[931px] shrink-0 items-center justify-center rounded-[6px] border border-[#d80000] pb-[3px] pl-5 text-[13.100px] font-bold text-[#d80000]">
          The review request has been registered as accepted. Asem Abdelaziz will be notified about your decision by email.
        </div>
        <h3 className="mt-[13px] ml-8 text-[18.200px] leading-6 text-black">Submission Information</h3>
        <SubmissionTable />
      </div>
      <div className="flex-1" />
      <div className="w-3 bg-[#f2f1ef] pl-[7px]">
        <div className="h-[241px] rounded-b-[2px] bg-[#f2906b]" />
      </div>
      <div className={`${UBUNTU} absolute bottom-0 left-0 flex h-[22px] w-[548px] items-center border-t border-r border-[#c2beb9] bg-[#f2f1ef] pl-[4px] text-[14.420px] whitespace-nowrap text-[#4a4844]`}>
        https://easychair.org/conferences/review_add_sub.cgi?a=19539246;rid=1772444
      </div>
    </div>
  );
}

export default function App() {
  return (
    <div className="flex h-[768px] w-[1366px] flex-col overflow-hidden">
      <SystemBar />
      <div className="flex min-h-0 flex-1">
        <Dock />
        <main className="flex min-w-0 flex-1 flex-col">
          <TitleBar />
          <TabStrip />
          <Toolbar />
          <Page />
        </main>
      </div>
    </div>
  );
}
